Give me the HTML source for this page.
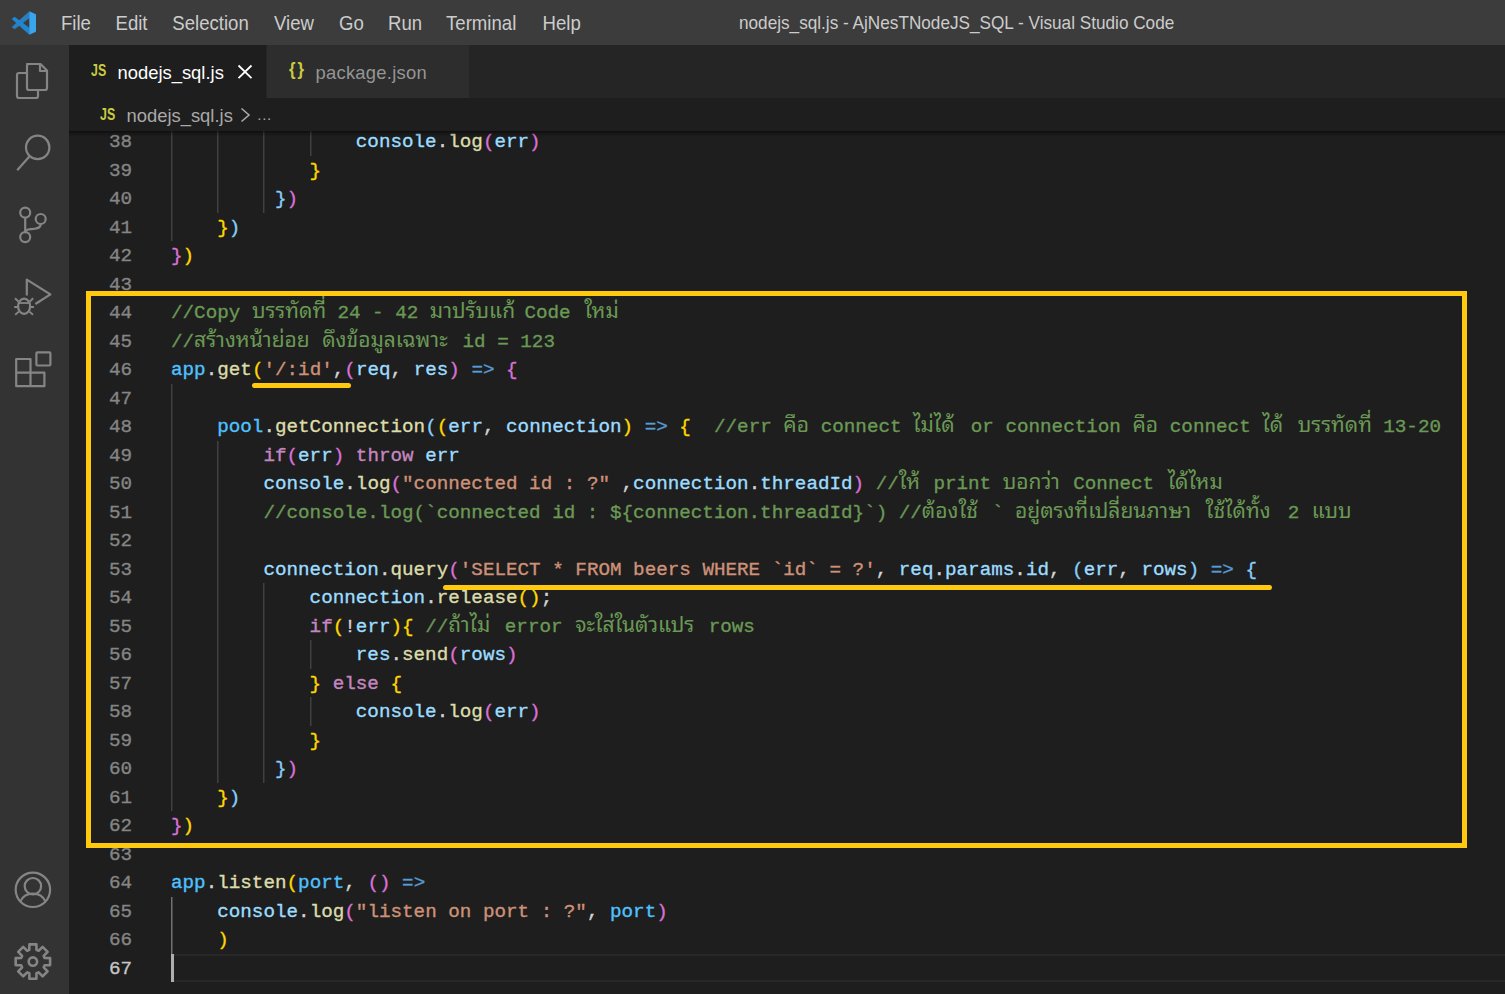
<!DOCTYPE html>
<html lang="th"><head><meta charset="utf-8"><title>nodejs_sql.js - AjNesTNodeJS_SQL - Visual Studio Code</title>
<style>
html,body{margin:0;padding:0}
body{width:1505px;height:994px;overflow:hidden;background:#1e1e1e;position:relative;font-family:"Liberation Sans",sans-serif;color:#ccc}
.abs{position:absolute}
#title{left:0;top:0;width:1505px;height:45px;background:#3c3c3c}
#title span{position:absolute;top:0.5px;height:45px;line-height:45px;font-size:18.6px;color:#ccc;white-space:nowrap;transform-origin:0 50%;transform:scaleY(1.075)}
#act{left:0;top:45px;width:69px;height:949px;background:#333}
#tabs{left:69px;top:45px;width:1436px;height:53px;background:#252526}
#tab1{left:0;top:0;width:197px;height:53px;background:#1e1e1e}
#tab2{left:198px;top:0;width:202px;height:53px;background:#2d2d2d}
.ui{position:absolute;white-space:nowrap;font-size:18.4px;transform-origin:0 50%}
.js{font-size:16px;font-weight:bold;color:#cbcb41;line-height:20px;transform:scaleX(.775)}
#bc{left:69px;top:98px;width:1436px;height:33px;background:#1e1e1e;z-index:3}
#sh{left:69px;top:131px;width:1436px;height:6px;background:linear-gradient(rgba(0,0,0,.55),rgba(0,0,0,.25) 40%,rgba(0,0,0,0));z-index:4}
#ed{left:69px;top:131px;width:1436px;height:863px;overflow:hidden}
.ln,.cl{position:absolute;height:28.5px;line-height:28.5px;font-family:"Liberation Mono","Noto Sans Thai Looped","Sarabun","Loma",monospace;font-size:19.25px;white-space:pre}
.ln{left:20px;width:43px;text-align:right;color:#858585}
.ln.cur{color:#c6c6c6}
.cl{color:#d4d4d4}.ln,.cl{-webkit-text-stroke:0.35px}.th{-webkit-text-stroke:0}
.th{display:inline-block;white-space:nowrap;font-family:"Noto Sans Thai Looped","Sarabun","Loma","Liberation Mono",monospace;font-size:21px;line-height:1px;vertical-align:baseline;color:#6a9955;overflow:visible}
.c{color:#4fc1ff}.cm{color:#6a9955}.v{color:#9cdcfe}.f{color:#dcdcaa}.s{color:#ce9178}.k{color:#c586c0}.a{color:#569cd6}.p{color:#d4d4d4}
.b1{color:#ffd700}.b2{color:#da70d6}.b3{color:#87cefa}
.g{position:absolute;width:2px;background:linear-gradient(90deg,#414141 50%,#2e2e2e 50%)}
.g.on{background:linear-gradient(90deg,#707070 50%,#474747 50%)}
#box{left:86px;top:291px;width:1371px;height:547px;border:5px solid #ffc90f;z-index:5}
.ul{height:5px;border-radius:2.5px;background:#ffc90f;z-index:5}
</style></head><body>
<div id="title" class="abs"><svg class="abs" style="left:12px;top:11px" width="24" height="24" viewBox="0 0 24 24"><path d="M17.3.2l.4 6.7L2.6 18.3.3 16.4q-.4-.4 0-.9z" fill="#2a7fc2"/><path d="M2.6 5.8l15.1 11.3-.4 6.7L.3 8.5q-.4-.5 0-.9z" fill="#1f86d2"/><path d="M17.3.2l6.1 2.8q.6.3.6 1v16q0 .7-.6 1l-6.1 2.8z" fill="#3aa5ef"/></svg><span style="left:61px">File</span><span style="left:115.5px">Edit</span><span style="left:172.3px">Selection</span><span style="left:274px">View</span><span style="left:339px">Go</span><span style="left:388px">Run</span><span style="left:446px">Terminal</span><span style="left:542.5px">Help</span><span id="wt" style="left:739px;top:1px;font-size:17.18px;transform:scaleY(1.04)">nodejs_sql.js - AjNesTNodeJS_SQL - Visual Studio Code</span></div>
<div id="act" class="abs"></div>
<svg class="abs" style="left:0;top:45px" width="69" height="949" viewBox="0 45 69 949" fill="none" stroke="#858585" stroke-width="2.2" stroke-linejoin="round"><path d="M27 64h13.5l6.5 6.5V88a2 2 0 0 1-2 2H29a2 2 0 0 1-2-2V66a2 2 0 0 1 2-2z"/><path d="M40 64.5V71h6.5"/><path d="M27 73h-8a2 2 0 0 0-2 2v21a2 2 0 0 0 2 2h17a2 2 0 0 0 2-2v-6"/><circle cx="37.7" cy="147.4" r="11.7"/><path d="M29.6 156.3 17.2 170.2"/><circle cx="25.2" cy="212.6" r="5"/><circle cx="25.2" cy="237.1" r="5"/><circle cx="40.7" cy="219" r="5"/><path d="M25.2 217.6v14.5"/><path d="M40.7 224c0 5-6 5-10 5.2-3 .2-5.5 1.2-5.5 3"/><path d="M26.8 295.5V279.6L50.4 294.4 35.4 304"/><ellipse cx="24.1" cy="306.3" rx="6" ry="7.6"/><path d="M18 303h12.2" stroke-width="1.8"/><path d="M18.4 301.5l-3.4-3.2M29.8 301.5l3.4-3.2M17.6 307h-3.4M30.6 307h3.4M18.8 311.6l-3.6 3.2M29.4 311.6l3.6 3.2" stroke-width="1.9"/><path d="M16.2 359h14.3v13.7h13.9v13.5H16.2z"/><path d="M16.2 372.7h14.3v13.5"/><rect x="36.4" y="352.3" width="14" height="13.2" rx="1"/><circle cx="32.9" cy="889.8" r="17.2"/><circle cx="32.9" cy="886.2" r="8.2"/><path d="M20.3 901.6c2.2-5.2 7-8 12.6-8s10.4 2.8 12.6 8"/><path d="M29.3 949.9 L29.4 944.4 L36.4 944.4 L36.5 949.9 L38.6 950.8 L42.6 946.9 L47.6 951.9 L43.7 955.9 L44.6 958.0 L50.1 958.1 L50.1 965.1 L44.6 965.2 L43.7 967.3 L47.6 971.3 L42.6 976.3 L38.6 972.4 L36.5 973.3 L36.4 978.8 L29.4 978.8 L29.3 973.3 L27.2 972.4 L23.2 976.3 L18.2 971.3 L22.1 967.3 L21.2 965.2 L15.7 965.1 L15.7 958.1 L21.2 958.0 L22.1 955.9 L18.2 951.9 L23.2 946.9 L27.2 950.8z" stroke-width="2.6"/><circle cx="32.9" cy="961.6" r="4.2" stroke-width="2.6"/></svg>
<div id="tabs" class="abs"><div id="tab1" class="abs"></div><div id="tab2" class="abs"></div><span class="ui js" style="left:21.5px;top:15.6px">JS</span><span class="ui" id="t1" style="left:48.5px;top:14.5px;line-height:26px;color:#fff">nodejs_sql.js</span><svg class="abs" style="left:168px;top:19px" width="16" height="16" viewBox="0 0 16 16"><path d="M1.5 1.5l13 12.6M14.5 1.5l-13 12.6" stroke="#fff" stroke-width="1.8" fill="none"/></svg><span class="ui" style="left:219.8px;top:11.3px;font-size:18.6px;font-weight:bold;color:#cbcb41;line-height:26px;letter-spacing:2.2px;transform:scaleX(.9)">{}</span><span class="ui" id="t2" style="left:246.5px;top:14.5px;line-height:26px;color:#959595;letter-spacing:.25px">package.json</span></div>
<div id="bc" class="abs"><span class="ui js" style="left:30.7px;top:7px">JS</span><span class="ui" id="b1" style="left:57.5px;top:4.5px;line-height:26px;color:#a9a9a9">nodejs_sql.js</span><svg class="abs" style="left:170px;top:9px" width="12" height="16" viewBox="0 0 12 16"><path d="M2.5 1.5 10 8l-7.5 6.5" stroke="#a9a9a9" stroke-width="1.6" fill="none"/></svg><span class="ui" id="b2" style="left:188.3px;top:4px;line-height:26px;color:#a9a9a9;font-size:15px;letter-spacing:.7px">...</span></div>
<div id="sh" class="abs"></div>
<div id="ed" class="abs"><div class="abs" style="left:-69px;top:-131px;width:1505px;height:994px"><div class="abs" style="left:171px;top:953.5px;width:1334px;height:24.5px;border-top:2px solid #282828;border-bottom:2px solid #282828"></div><div class="abs" style="left:171px;top:953.5px;width:2.5px;height:28.5px;background:#aeafad"></div><div class="g" style="left:171px;top:127.0px;height:114.0px"></div><div class="g" style="left:217px;top:127.0px;height:85.5px"></div><div class="g" style="left:263px;top:127.0px;height:85.5px"></div><div class="g" style="left:310px;top:127.0px;height:28.5px"></div><div class="g" style="left:171px;top:383.5px;height:427.5px"></div><div class="g" style="left:217px;top:440.5px;height:342.0px"></div><div class="g" style="left:263px;top:583.0px;height:199.5px"></div><div class="g" style="left:310px;top:640.0px;height:28.5px"></div><div class="g" style="left:310px;top:697.0px;height:28.5px"></div><div class="g on" style="left:171px;top:896.5px;height:57.0px"></div>
<div class="ln" style="left:89px;top:128.0px">38</div><div class="cl" style="left:355.80px;top:128.0px"><span class="v">console</span><span class="p">.</span><span class="f">log</span><span class="b2">(</span><span class="v">err</span><span class="b2">)</span></div>
<div class="ln" style="left:89px;top:156.5px">39</div><div class="cl" style="left:309.60px;top:156.5px"><span class="b1">}</span></div>
<div class="ln" style="left:89px;top:185.0px">40</div><div class="cl" style="left:274.95px;top:185.0px"><span class="b3">}</span><span class="b2">)</span></div>
<div class="ln" style="left:89px;top:213.5px">41</div><div class="cl" style="left:217.20px;top:213.5px"><span class="b1">}</span><span class="b3">)</span></div>
<div class="ln" style="left:89px;top:242.0px">42</div><div class="cl" style="left:171.00px;top:242.0px"><span class="b2">}</span><span class="b1">)</span></div>
<div class="ln" style="left:89px;top:270.5px">43</div>
<div class="ln" style="left:89px;top:299.0px">44</div><div class="cl" style="left:171.00px;top:299.0px"><span class="cm">//Copy </span><span class="th" style="width:74.0px">บรรทัดที่</span><span class="cm"> 24 - 42 </span><span class="th" style="width:83.0px">มาปรับแก้</span><span class="cm"> Code </span><span class="th" style="width:36.0px;padding-left:2px">ใหม่</span></div>
<div class="ln" style="left:89px;top:327.5px">45</div><div class="cl" style="left:171.00px;top:327.5px"><span class="cm">//</span><span class="th" style="width:116.5px">สร้างหน้าย่อย</span><span class="cm"> </span><span class="th" style="width:128.8px">ดึงข้อมูลเฉพาะ</span><span class="cm"> id = 123</span></div>
<div class="ln" style="left:89px;top:356.0px">46</div><div class="cl" style="left:171.00px;top:356.0px"><span class="c">app</span><span class="p">.</span><span class="f">get</span><span class="b1">(</span><span class="s">'/:id'</span><span class="p">,</span><span class="b2">(</span><span class="v">req</span><span class="p">, </span><span class="v">res</span><span class="b2">)</span><span class="a"> =&gt;</span><span class="b2"> {</span></div>
<div class="ln" style="left:89px;top:384.5px">47</div>
<div class="ln" style="left:89px;top:413.0px">48</div><div class="cl" style="left:217.20px;top:413.0px"><span class="c">pool</span><span class="p">.</span><span class="f">getConnection</span><span class="b3">(</span><span class="b1">(</span><span class="v">err</span><span class="p">, </span><span class="v">connection</span><span class="b1">)</span><span class="a"> =&gt;</span><span class="b1"> {</span><span class="cm">  //err </span><span class="th" style="width:25.8px">คือ</span><span class="cm"> connect </span><span class="th" style="width:46.1px">ไม่ได้</span><span class="cm"> or connection </span><span class="th" style="width:25.8px">คือ</span><span class="cm"> connect </span><span class="th" style="width:23.9px">ได้</span><span class="cm"> </span><span class="th" style="width:74.0px">บรรทัดที่</span><span class="cm"> 13-20</span></div>
<div class="ln" style="left:89px;top:441.5px">49</div><div class="cl" style="left:263.40px;top:441.5px"><span class="k">if</span><span class="b2">(</span><span class="v">err</span><span class="b2">)</span><span class="k"> throw</span><span class="v"> err</span></div>
<div class="ln" style="left:89px;top:470.0px">50</div><div class="cl" style="left:263.40px;top:470.0px"><span class="v">console</span><span class="p">.</span><span class="f">log</span><span class="b2">(</span><span class="s">"connected id : ?"</span><span class="p"> ,</span><span class="v">connection</span><span class="p">.</span><span class="v">threadId</span><span class="b2">)</span><span class="cm"> //</span><span class="th" style="width:23.0px">ให้</span><span class="cm"> print </span><span class="th" style="width:59.0px">บอกว่า</span><span class="cm"> Connect </span><span class="th" style="width:58.0px;padding-left:2px">ได้ไหม</span></div>
<div class="ln" style="left:89px;top:498.5px">51</div><div class="cl" style="left:263.40px;top:498.5px"><span class="cm">//console.log(`connected id : ${connection.threadId}`) //</span><span class="th" style="width:58.5px">ต้องใช้</span><span class="cm"> ` </span><span class="th" style="width:177.0px">อยู่ตรงที่เปลี่ยนภาษา</span><span class="cm"> </span><span class="th" style="width:70.5px;padding-left:2px">ใช้ได้ทั้ง</span><span class="cm"> 2 </span><span class="th" style="width:36.0px;padding-left:1px">แบบ</span></div>
<div class="ln" style="left:89px;top:527.0px">52</div>
<div class="ln" style="left:89px;top:555.5px">53</div><div class="cl" style="left:263.40px;top:555.5px"><span class="v">connection</span><span class="p">.</span><span class="f">query</span><span class="b2">(</span><span class="s">'SELECT * FROM beers WHERE `id` = ?'</span><span class="p">, </span><span class="v">req</span><span class="p">.</span><span class="v">params</span><span class="p">.</span><span class="v">id</span><span class="p">, </span><span class="b3">(</span><span class="v">err</span><span class="p">, </span><span class="v">rows</span><span class="b3">)</span><span class="a"> =&gt;</span><span class="b3"> {</span></div>
<div class="ln" style="left:89px;top:584.0px">54</div><div class="cl" style="left:309.60px;top:584.0px"><span class="v">connection</span><span class="p">.</span><span class="f">release</span><span class="b1">()</span><span class="p">;</span></div>
<div class="ln" style="left:89px;top:612.5px">55</div><div class="cl" style="left:309.60px;top:612.5px"><span class="k">if</span><span class="b1">(</span><span class="p">!</span><span class="v">err</span><span class="b1">){</span><span class="cm"> //</span><span class="th" style="width:45.0px">ถ้าไม่</span><span class="cm"> error </span><span class="th" style="width:122.0px;padding-left:1px">จะใส่ในตัวแปร</span><span class="cm"> rows</span></div>
<div class="ln" style="left:89px;top:641.0px">56</div><div class="cl" style="left:355.80px;top:641.0px"><span class="v">res</span><span class="p">.</span><span class="f">send</span><span class="b2">(</span><span class="v">rows</span><span class="b2">)</span></div>
<div class="ln" style="left:89px;top:669.5px">57</div><div class="cl" style="left:309.60px;top:669.5px"><span class="b1">}</span><span class="k"> else</span><span class="b1"> {</span></div>
<div class="ln" style="left:89px;top:698.0px">58</div><div class="cl" style="left:355.80px;top:698.0px"><span class="v">console</span><span class="p">.</span><span class="f">log</span><span class="b2">(</span><span class="v">err</span><span class="b2">)</span></div>
<div class="ln" style="left:89px;top:726.5px">59</div><div class="cl" style="left:309.60px;top:726.5px"><span class="b1">}</span></div>
<div class="ln" style="left:89px;top:755.0px">60</div><div class="cl" style="left:274.95px;top:755.0px"><span class="b3">}</span><span class="b2">)</span></div>
<div class="ln" style="left:89px;top:783.5px">61</div><div class="cl" style="left:217.20px;top:783.5px"><span class="b1">}</span><span class="b3">)</span></div>
<div class="ln" style="left:89px;top:812.0px">62</div><div class="cl" style="left:171.00px;top:812.0px"><span class="b2">}</span><span class="b1">)</span></div>
<div class="ln" style="left:89px;top:840.5px">63</div>
<div class="ln" style="left:89px;top:869.0px">64</div><div class="cl" style="left:171.00px;top:869.0px"><span class="c">app</span><span class="p">.</span><span class="f">listen</span><span class="b1">(</span><span class="c">port</span><span class="p">, </span><span class="b2">()</span><span class="a"> =&gt;</span></div>
<div class="ln" style="left:89px;top:897.5px">65</div><div class="cl" style="left:217.20px;top:897.5px"><span class="v">console</span><span class="p">.</span><span class="f">log</span><span class="b2">(</span><span class="s">"listen on port : ?"</span><span class="p">, </span><span class="c">port</span><span class="b2">)</span></div>
<div class="ln" style="left:89px;top:926.0px">66</div><div class="cl" style="left:217.20px;top:926.0px"><span class="b1">)</span></div>
<div class="ln cur" style="left:89px;top:954.5px">67</div>
</div></div>
<div id="box" class="abs"></div><div class="abs ul" style="left:252px;top:383px;width:99px"></div><div class="abs ul" style="left:443px;top:585px;width:829px"></div>
</body></html>
